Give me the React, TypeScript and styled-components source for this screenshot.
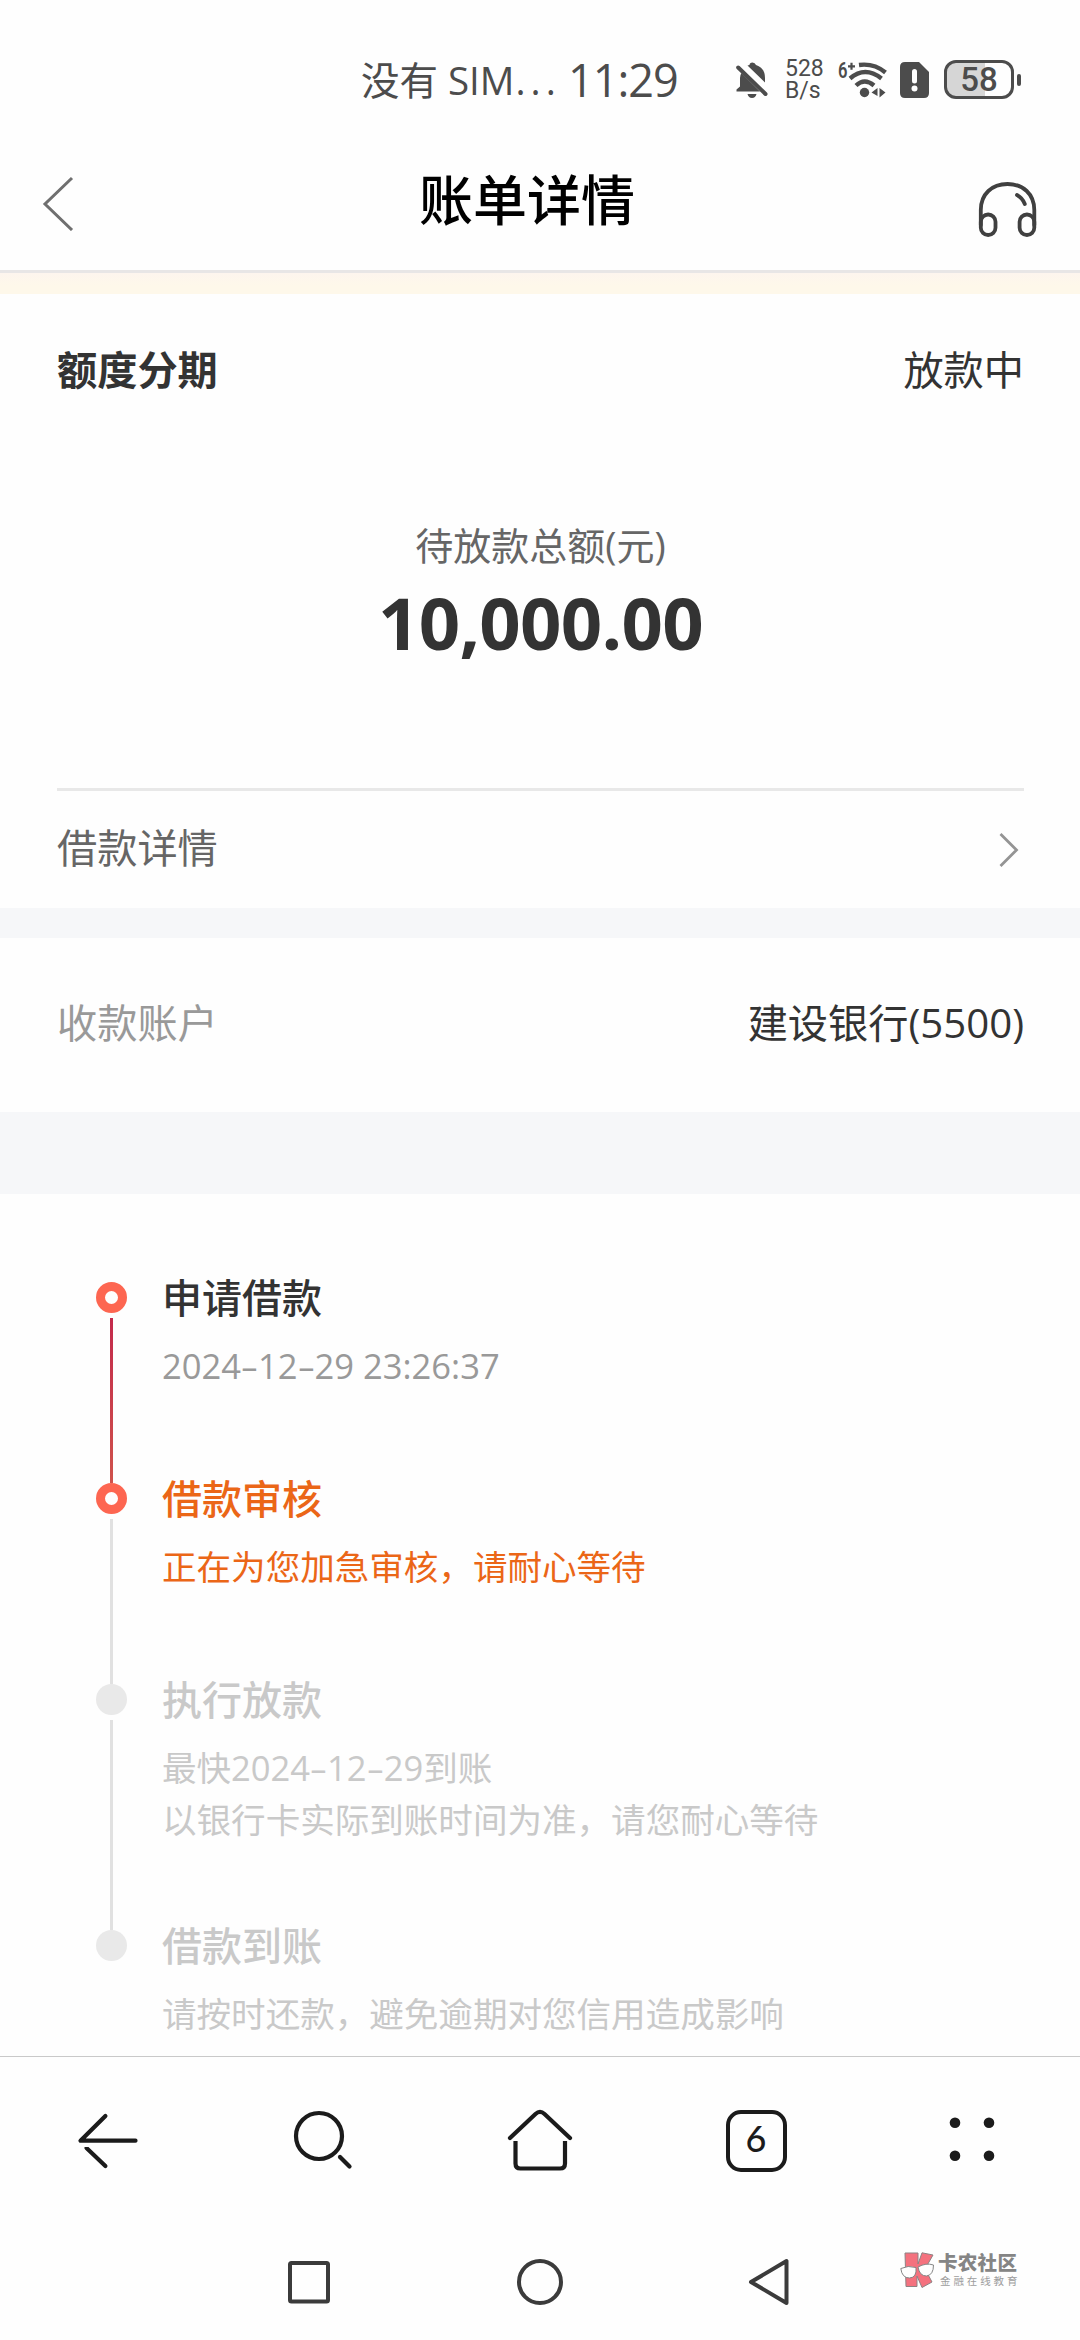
import React from "react";
import styled, { createGlobalStyle, css } from "styled-components";

const GlobalStyle = createGlobalStyle`
  * { box-sizing: border-box; }
  body {
    margin: 0;
    background: #fefefe;
    font-family: "Open Sans", "Noto Sans CJK SC", sans-serif;
    color: #333;
  }
  svg { display: block; }
`;

const Screen = styled.main`
  position: relative;
  width: 1080px;
  height: 2340px;
  overflow: hidden;
  display: flex;
  flex-direction: column;
  background: #fefefe;
`;

/* ---------- status bar ---------- */

const StatusBar = styled.header`
  height: 135px;
  padding: 24px 57px 0 361px;
  display: flex;
  align-items: center;
  color: #4c4c4c;
`;

const Carrier = styled.span`
  width: 207px;
  font-size: 38.5px;
  line-height: 56px;
  display: flex;
  white-space: pre;
`;

const Dots = styled.span`
  letter-spacing: 5px;
  margin-left: 1px;
`;

const Clock = styled.span`
  width: 168px;
  font-size: 45px;
  line-height: 60px;
  font-weight: 500;
  letter-spacing: -1px;
  white-space: nowrap;
`;

const StatusIcon = styled.svg<{ $gap?: number }>`
  flex: none;
  margin-right: ${(p) => p.$gap ?? 0}px;
`;

const Speed = styled.span`
  width: 53px;
  display: flex;
  flex-direction: column;
  font-family: Roboto, sans-serif;
  font-size: 23px;
  line-height: 22px;
`;

const Battery = styled.span`
  width: 70px;
  height: 39px;
  border: 3px solid #4c4c4c;
  border-radius: 12px;
  display: flex;
  align-items: center;
  justify-content: center;
  background: linear-gradient(90deg, #d6d6d6 60%, #fefefe 60%);
  font-family: Roboto, sans-serif;
  font-weight: 500;
  font-size: 33px;
  line-height: 33px;
`;

const BatteryTip = styled.span`
  width: 4px;
  height: 12px;
  margin-left: 3px;
  border-radius: 2px;
  background: #4c4c4c;
`;

/* ---------- page header ---------- */

const TitleBar = styled.div`
  height: 138px;
  border-bottom: 3px solid #e8e6e6;
  padding: 0 41px 0 41px;
  display: flex;
  justify-content: space-between;
  align-items: center;
`;

const Title = styled.h1`
  margin: 0 0 6px 2px;
  font-size: 54px;
  line-height: 72px;
  font-weight: 500;
  color: #000;
`;

const HeadsetIcon = styled.svg`
  margin-top: 8px;
  fill: none;
  stroke: #404040;
  stroke-width: 3.8;
  stroke-linecap: round;
`;

const NoticeStrip = styled.div`
  height: 21px;
  background: linear-gradient(#fdf5ee, #fef8ea 60%);
`;

/* ---------- bill cards ---------- */

const Card = styled.section`
  padding: 0 56px 0 57px;
  display: flex;
  flex-direction: column;
`;

const Row = styled.div<{ $height: number; $lift?: number; $ruled?: boolean }>`
  height: ${(p) => p.$height}px;
  padding-bottom: ${(p) => p.$lift ?? 0}px;
  display: flex;
  align-items: center;
  justify-content: space-between;
  ${(p) => p.$ruled && css`border-top: 3px solid #e8e8e8;`}
`;

const Label = styled.span<{ $color?: string; $bold?: boolean }>`
  font-size: 40.2px;
  line-height: 56px;
  color: ${(p) => p.$color ?? "#333"};
  font-weight: ${(p) => (p.$bold ? 700 : 400)};
`;

const Total = styled.div`
  height: 342px;
  padding-top: 74px;
  display: flex;
  flex-direction: column;
  align-items: center;
`;

const TotalLabel = styled.span`
  font-size: 38px;
  line-height: 50px;
  color: #666;
`;

const TotalAmount = styled.strong`
  margin-top: 2px;
  font-size: 72.5px;
  line-height: 100px;
  font-weight: 700;
  letter-spacing: -0.7px;
`;

const Band = styled.div<{ $height: number }>`
  height: ${(p) => p.$height}px;
  background: #f6f7f9;
`;

/* ---------- progress timeline ---------- */

const Timeline = styled.ol`
  list-style: none;
  margin: 0;
  padding: 88px 0 0 96px;
  height: 862px;
`;

const Step = styled.li<{ $height: number }>`
  height: ${(p) => p.$height}px;
  display: flex;
  gap: 35px;
`;

const Rail = styled.div`
  width: 31px;
  display: flex;
  flex-direction: column;
  align-items: center;
`;

const Marker = styled.i<{ $done: boolean }>`
  flex: none;
  width: 31px;
  height: 31px;
  border-radius: 50%;
  background: ${(p) => (p.$done ? "#fefefe" : "#e9e9e9")};
  ${(p) => p.$done && css`border: 9px solid #fd6651;`}
`;

const Connector = styled.i<{ $done: boolean }>`
  flex: 1;
  width: 3px;
  margin-top: 5px;
  background: ${(p) => (p.$done ? "linear-gradient(#c32a4b, #cf524c)" : "#e1e1e1")};
`;

const StepBody = styled.div`
  display: flex;
  flex-direction: column;
  white-space: nowrap;
`;

const StepTitle = styled.h2<{ $color: string }>`
  margin: 0 0 27px;
  font-size: 40px;
  line-height: 31px;
  font-weight: 500;
  color: ${(p) => p.$color};
`;

const StepText = styled.p<{ $color: string }>`
  margin: 0;
  font-size: 34.55px;
  line-height: 52px;
  color: ${(p) => p.$color};
`;

const Hyphen = styled.span`
  display: inline-block;
  width: 17px;
  text-align: center;
  transform: scaleX(1.6);
`;

/* ---------- bottom bars ---------- */

const Toolbar = styled.nav`
  height: 169px;
  border-top: 1px solid #c9c9c9;
  display: grid;
  grid-template-columns: repeat(5, 1fr);
  place-items: center;
`;

const LineIcon = styled.svg`
  fill: none;
  stroke: #1b1b1b;
  stroke-width: 4.2;
  stroke-linecap: round;
  stroke-linejoin: round;
`;

const TabCount = styled.span`
  width: 61px;
  height: 62px;
  border: 4px solid #1b1b1b;
  border-radius: 15px;
  display: flex;
  justify-content: center;
  font-family: Lato, sans-serif;
  font-size: 36px;
  line-height: 48px;
  font-weight: 500;
  color: #1b1b1b;
`;

const SystemNav = styled.nav`
  height: 115px;
  display: grid;
  grid-template-columns: repeat(3, 231px);
  justify-content: center;
  place-items: center;
`;

const SystemIcon = styled.svg`
  fill: none;
  stroke: #3b3b3b;
  stroke-width: 4;
  stroke-linejoin: round;
`;

const Watermark = styled.aside`
  position: absolute;
  left: 900px;
  top: 2252px;
  display: flex;
  gap: 3px;
`;

const WatermarkText = styled.div`
  display: flex;
  flex-direction: column;
  white-space: nowrap;
`;

const WatermarkName = styled.b`
  font-size: 19.5px;
  line-height: 22px;
  font-weight: 900;
  color: #858585;
  letter-spacing: 0.3px;
`;

const WatermarkTag = styled.span`
  padding-left: 2px;
  font-size: 10.5px;
  line-height: 14px;
  color: #9d9d9d;
  letter-spacing: 2.9px;
`;

const dated = (text: string) =>
  text.split("-").map((part, i) => (
    <React.Fragment key={i}>
      {i > 0 && <Hyphen>-</Hyphen>}
      {part}
    </React.Fragment>
  ));

type StepData = {
  title: string;
  lines: string[];
  height: number;
  done: boolean;
  lineDone?: boolean;
  titleColor: string;
  textColor: string;
};

const steps: StepData[] = [
  { title: "申请借款", lines: ["2024-12-29 23:26:37"], height: 201, done: true, lineDone: true, titleColor: "#333", textColor: "#999" },
  { title: "借款审核", lines: ["正在为您加急审核，请耐心等待"], height: 201, done: true, titleColor: "#eb6617", textColor: "#eb6617" },
  { title: "执行放款", lines: ["最快2024-12-29到账", "以银行卡实际到账时间为准，请您耐心等待"], height: 246, done: false, titleColor: "#c9c9c9", textColor: "#c9c9c9" },
  { title: "借款到账", lines: ["请按时还款，避免逾期对您信用造成影响"], height: 110, done: false, titleColor: "#c9c9c9", textColor: "#c9c9c9" },
];

export default function App() {
  return (
    <Screen lang="zh-CN">
      <GlobalStyle />

      <StatusBar>
        <Carrier>
          <span>没有 SIM</span>
          <Dots>...</Dots>
        </Carrier>
        <Clock>11:29</Clock>
        <StatusIcon width="32" height="38" viewBox="0 0 32 38" fill="#4c4c4c" $gap={17}>
          <path d="M13.500 4 Q13.500 1.500 16.500 1.500 Q19 1.500 20 4 Q29 7 29 17 V21.500 L11.500 4.500 Z" />
          <path d="M5.500 12 L24 30.500 H0.500 V28.500 L4 25.500 V17 Q4 14 5.500 12 Z" />
          <path d="M11.500 33 H20.500 Q19.500 37 16 37 Q12.500 37 11.500 33 Z" />
          <path d="M2.200 6.500 L29.500 33" stroke="#4c4c4c" strokeWidth="4" strokeLinecap="round" />
        </StatusIcon>
        <Speed>
          <span>528</span>
          <span>B/s</span>
        </Speed>
        <StatusIcon width="52" height="40" viewBox="0 0 52 40" fill="none" stroke="#4c4c4c" $gap={10}>
          <text x="0" y="18" fill="#4c4c4c" stroke="none" fontFamily="Roboto" fontWeight="600" fontSize="21.500" textLength="9.500" lengthAdjust="spacingAndGlyphs">6</text>
          <path d="M13.500 2.800 V9.800 M10 6.300 H17" strokeWidth="2.200" />
          <path d="M21 5 Q36 3 47.500 12.500" strokeWidth="4.400" />
          <path d="M12 18.500 Q27 5.500 43.500 18.500" strokeWidth="4.400" />
          <path d="M18 25.500 Q26.500 17.500 36 25.500" strokeWidth="4.400" />
          <circle cx="26.500" cy="32.500" r="4.700" fill="#4c4c4c" stroke="none" />
          <path d="M39.500 28 V36 L33.500 32.500 Z M41.500 28 V37.500 L47.500 32.500 Z" fill="#4c4c4c" stroke="none" />
        </StatusIcon>
        <StatusIcon width="29" height="36" viewBox="0 0 29 36" $gap={15}>
          <path d="M5 0 H19 L29 10 V31 Q29 36 24 36 H5 Q0 36 0 31 V5 Q0 0 5 0 Z" fill="#4c4c4c" />
          <path d="M14.500 9.500 V19" stroke="#fefefe" strokeWidth="5" strokeLinecap="round" />
          <circle cx="14.500" cy="26.500" r="3" fill="#fefefe" />
        </StatusIcon>
        <Battery>58</Battery>
        <BatteryTip />
      </StatusBar>

      <TitleBar>
        <svg width="34" height="56" viewBox="0 0 34 56" fill="none" stroke="#6f6f6f" strokeWidth="3">
          <path d="M31 3 L4 29 L31 55" />
        </svg>
        <Title>账单详情</Title>
        <HeadsetIcon width="62" height="60" viewBox="0 0 62 60">
          <path d="M3.800 48 V33 C3.800 17 15 7 30.500 7 S57.300 17 57.300 33 V48" />
          <rect x="3.800" y="37.500" width="14.700" height="20.500" rx="7.300" />
          <rect x="42.600" y="37.500" width="14.700" height="20.500" rx="7.300" />
          <path d="M40 18 Q45.500 21 47.800 27" />
        </HeadsetIcon>
      </TitleBar>
      <NoticeStrip />

      <Card>
        <Row $height={152}>
          <Label $bold>额度分期</Label>
          <Label>放款中</Label>
        </Row>
        <Total>
          <TotalLabel>待放款总额(元)</TotalLabel>
          <TotalAmount>10,000.00</TotalAmount>
        </Total>
        <Row $height={120} $lift={3} $ruled>
          <Label $color="#666">借款详情</Label>
          <svg width="30" height="40" viewBox="0 0 30 40" fill="none" stroke="#949494" strokeWidth="2.800">
            <path d="M6.500 6 L22.500 22 L6.500 38" />
          </svg>
        </Row>
      </Card>
      <Band $height={30} />
      <Card>
        <Row $height={174} $lift={4}>
          <Label $color="#999">收款账户</Label>
          <Label>建设银行(5500)</Label>
        </Row>
      </Card>
      <Band $height={82} />

      <Timeline>
        {steps.map((s, i) => (
          <Step key={s.title} $height={s.height}>
            <Rail>
              <Marker $done={s.done} />
              {i < steps.length - 1 && <Connector $done={!!s.lineDone} />}
            </Rail>
            <StepBody>
              <StepTitle $color={s.titleColor}>{s.title}</StepTitle>
              {s.lines.map((line) => (
                <StepText key={line} $color={s.textColor}>{dated(line)}</StepText>
              ))}
            </StepBody>
          </Step>
        ))}
      </Timeline>

      <Toolbar>
        <LineIcon width="72" height="72" viewBox="0 0 72 72">
          <path d="M33.400 11 L8.500 35.700 H63.500" />
          <path d="M14.500 43 L33.400 61" />
          <path d="M6 40.500 H22" stroke="#fefefe" strokeWidth="3" strokeLinecap="butt" />
        </LineIcon>
        <LineIcon width="72" height="72" viewBox="0 0 72 72">
          <circle cx="31" cy="31" r="23" />
          <path d="M52 52 L61.500 61.500" />
        </LineIcon>
        <LineIcon width="72" height="72" viewBox="0 0 72 72">
          <path d="M6 33 L31.500 9 Q36 4.800 40.500 9 L66 33" />
          <path d="M11.500 36 V58.500 Q11.500 63.500 16.500 63.500 H56 Q61 63.500 61 58.500 V36" strokeLinecap="butt" />
        </LineIcon>
        <TabCount>6</TabCount>
        <svg width="72" height="72" viewBox="0 0 72 72" fill="#1b1b1b">
          <circle cx="19" cy="17.700" r="5.300" />
          <circle cx="53" cy="17.700" r="5.300" />
          <circle cx="19" cy="50.700" r="5.300" />
          <circle cx="53" cy="50.700" r="5.300" />
        </svg>
      </Toolbar>

      <SystemNav>
        <SystemIcon width="50" height="50" viewBox="0 0 50 50">
          <rect x="6" y="5" width="38" height="38.500" rx="1.500" />
        </SystemIcon>
        <SystemIcon width="50" height="50" viewBox="0 0 50 50">
          <circle cx="25" cy="24" r="21" />
        </SystemIcon>
        <SystemIcon width="50" height="50" viewBox="0 0 50 50">
          <path d="M40.500 3 V45 L5 24 Z" />
        </SystemIcon>
      </SystemNav>

      <Watermark>
        <svg width="35" height="36" viewBox="0 0 35 36">
          <g fill="#f4717e" stroke="#8d8284" strokeWidth="1">
            <path d="M5 1 H18 V12 L22 0.800 L33 3 L25 17 L32 30 L22 35.500 L17 24 L17 34.500 H6 Z" />
          </g>
          <g fill="#fefefe" stroke="#858585" strokeWidth="1">
            <path d="M0.800 16.500 Q8 13 16 15.500 Q17 25.500 9.500 26 Q2 26 0.800 16.500 Z" />
            <path d="M18 15 Q26 10.500 33.500 13 Q33.500 23 26.500 24 Q19.500 24 18 15 Z" />
          </g>
        </svg>
        <WatermarkText>
          <WatermarkName>卡农社区</WatermarkName>
          <WatermarkTag>金融在线教育</WatermarkTag>
        </WatermarkText>
      </Watermark>
    </Screen>
  );
}
